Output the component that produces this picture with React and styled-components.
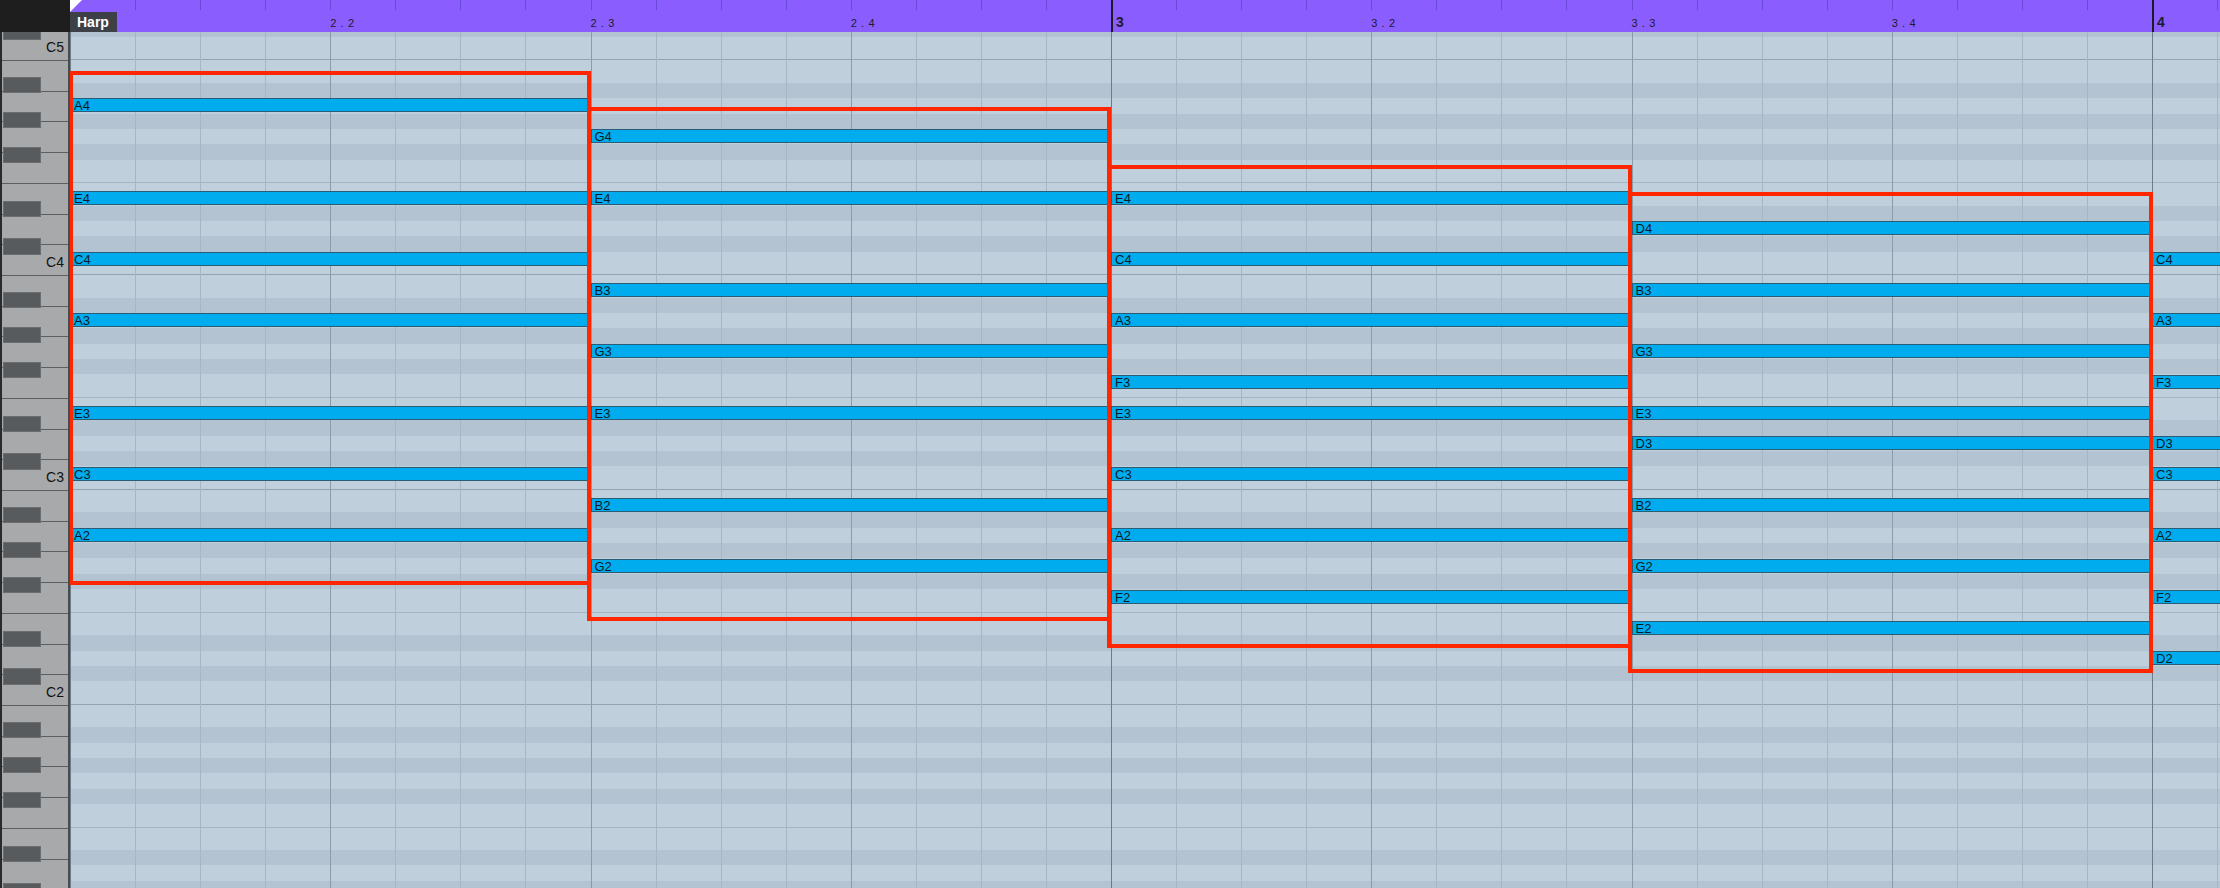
import React from "react";
import styled, { createGlobalStyle } from "styled-components";

// geometry of the piano roll (px)
const SLOT = 215 / 14; // one slot of the keyboard grid, 14 per octave
const WHITE = 215 / 7;
const SIXTEENTH = 65.0625;
const BEAT = SIXTEENTH * 4;

const OCTAVES = [5, 4, 3, 2, 1];
const WHITE_KEYS = ["B", "A", "G", "F", "E", "D", "C"];
const BLACK_TOPS = [16.7, 51.7, 86.7, 140.7, 178];
// slot kinds inside one octave block, top to bottom
const SLOTS = ["split", "w", "b", "w", "b", "w", "b", "w", "fold", "w", "b", "w", "b", "w"];
const SLOT_OF = { B: 1, A: 3, G: 5, F: 7, E: 9, D: 11, C: 13 };

const blockTop = (octave) => 28 - SLOT / 2 + (4 - octave) * 215;
const noteTop = (name) => blockTop(Number(name.slice(1))) + SLOT_OF[name[0]] * SLOT;

const CHORDS = [
  { beat: 0, notes: ["A4", "E4", "C4", "A3", "E3", "C3", "A2"] },
  { beat: 2, notes: ["G4", "E4", "B3", "G3", "E3", "B2", "G2"] },
  { beat: 4, notes: ["E4", "C4", "A3", "F3", "E3", "C3", "A2", "F2"] },
  { beat: 6, notes: ["D4", "B3", "G3", "E3", "D3", "B2", "G2", "E2"] },
  { beat: 8, notes: ["C4", "A3", "F3", "D3", "C3", "A2", "F2", "D2"] },
];

const BOXES = [
  { left: -1, top: 39, width: 522, height: 514 },
  { left: 516.5, top: 75, width: 524.5, height: 514 },
  { left: 1036.5, top: 133, width: 525, height: 483 },
  { left: 1557.5, top: 160, width: 525, height: 481 },
];

const BEATS = [
  { label: "", bar: true },
  { label: "2 . 2" },
  { label: "2 . 3" },
  { label: "2 . 4" },
  { label: "3", bar: true },
  { label: "3 . 2" },
  { label: "3 . 3" },
  { label: "3 . 4" },
  { label: "4", bar: true },
];

const GlobalStyle = createGlobalStyle`
  html, body {
    margin: 0;
    padding: 0;
    background: #c0cfdc;
    overflow: hidden;
  }
  body {
    font-family: "Liberation Sans", Arial, sans-serif;
  }
`;

const Page = styled.div`
  width: 2220px;
  height: 888px;
  display: flex;
  flex-direction: column;
  overflow: hidden;
`;

const Header = styled.div`
  display: flex;
  height: 32px;
  flex: 0 0 auto;
`;

const Corner = styled.div`
  width: 70px;
  flex: 0 0 auto;
  background: #1e1e1e;
`;

const Ruler = styled.div`
  flex: 1;
  display: flex;
  background: #8a5dff;
  overflow: hidden;
`;

const BeatCell = styled.div`
  position: relative;
  flex: 0 0 ${BEAT}px;
  display: flex;
  flex-direction: column;
  background: ${(p) =>
    p.$bar ? "linear-gradient(to right, #1c1a26 0 2px, transparent 2px)" : "none"};
`;

const TickRow = styled.div`
  display: flex;
  height: 10px;
`;

const Tick = styled.div`
  flex: 0 0 ${SIXTEENTH}px;
  box-sizing: border-box;
  border-left: 1px solid ${(p) => (p.$hidden ? "transparent" : "#6a49d6")};
`;

const Flag = styled.div`
  position: absolute;
  left: 0;
  top: 0;
  width: 12px;
  height: 12px;
  background: #ffffff;
  clip-path: polygon(0 0, 100% 0, 0 100%);
`;

const TrackChip = styled.div`
  align-self: flex-start;
  margin-top: 2px;
  height: 20px;
  padding: 0 8px 0 7px;
  background: #3d4047;
  color: #ffffff;
  font-size: 14px;
  font-weight: bold;
  line-height: 20px;
`;

const BeatLabel = styled.div`
  margin-top: ${(p) => (p.$bar ? "4px" : "6.6px")};
  padding-left: ${(p) => (p.$bar ? "5px" : "0")};
  font-size: ${(p) => (p.$bar ? "14px" : "11px")};
  line-height: ${(p) => (p.$bar ? "16px" : "13px")};
  font-weight: ${(p) => (p.$bar ? "bold" : "normal")};
  letter-spacing: ${(p) => (p.$bar ? "0" : "0.6px")};
  color: #1d1b2c;
  white-space: pre;
`;

const Body = styled.div`
  flex: 1;
  display: flex;
  min-height: 0;
`;

const Keyboard = styled.div`
  width: 66px;
  flex: 0 0 auto;
  border-left: 2px solid #2a2a2b;
  border-right: 2px solid #484b4f;
  background: #a8a9ab;
  overflow: hidden;
`;

const KeyStack = styled.div`
  margin-top: ${blockTop(5) + SLOT / 2}px;
`;

const KeyOctave = styled.div`
  position: relative;
  height: 215px;
  display: flex;
  flex-direction: column;
`;

const WhiteKey = styled.div`
  flex: 0 0 ${WHITE}px;
  box-sizing: border-box;
  border-top: 1px solid #5c5f62;
  display: flex;
  align-items: flex-end;
  justify-content: flex-end;
  padding: 0 4px 6px 0;
  font-size: 14px;
  line-height: 14px;
  color: #111111;
`;

const BlackKey = styled.div`
  position: absolute;
  left: 1px;
  width: 37.7px;
  height: 16.6px;
  box-sizing: border-box;
  background: #585b5e;
  border: 1px solid #6b6e71;
`;

const Roll = styled.div`
  position: relative;
  flex: 1;
  overflow: hidden;
`;

const RowStack = styled.div`
  margin-top: ${blockTop(5)}px;
`;

const RowBlock = styled.div`
  display: flex;
  flex-direction: column;
`;

const Row = styled.div`
  flex: 0 0 ${SLOT}px;
  display: flex;
  flex-direction: column;
  justify-content: center;
  background: ${(p) => (p.$kind === "b" ? "#b3c3d1" : "#c0cfdc")};
`;

const RowLine = styled.div`
  height: 1px;
  background: ${(p) => (p.$strong ? "#93a3b1" : "#a5b5c2")};
`;

const Columns = styled.div`
  position: absolute;
  inset: 0;
  display: flex;
  pointer-events: none;
`;

const Column = styled.div`
  flex: 0 0 ${SIXTEENTH}px;
  box-sizing: border-box;
  border-left: 1px solid
    ${(p) => (p.$level === 2 ? "#6c7c8a" : p.$level === 1 ? "#8b9baa" : "#a7b6c4")};
`;

const Note = styled.div`
  position: absolute;
  height: 14px;
  box-sizing: border-box;
  background: #00abee;
  border: 1px solid #295d75;
  padding-left: 3px;
  font-size: 13px;
  line-height: 14px;
  color: #0b1b25;
  white-space: nowrap;
  overflow: hidden;
`;

const Selection = styled.div`
  position: absolute;
  box-sizing: border-box;
  border: 4px solid #ff2600;
  pointer-events: none;
`;

export default function App() {
  return (
    <>
      <GlobalStyle />
      <Page>
        <Header>
          <Corner />
          <Ruler>
            {BEATS.map((b, i) => (
              <BeatCell key={i} $bar={b.bar && i > 0}>
                {i === 0 && <Flag />}
                <TickRow>
                  {[0, 1, 2, 3].map((t) => (
                    <Tick key={t} $hidden={t === 0 && b.bar} />
                  ))}
                </TickRow>
                {i === 0 ? (
                  <TrackChip>Harp</TrackChip>
                ) : (
                  <BeatLabel $bar={b.bar}>{b.label}</BeatLabel>
                )}
              </BeatCell>
            ))}
          </Ruler>
        </Header>
        <Body>
          <Keyboard>
            <KeyStack>
              {OCTAVES.map((o) => (
                <KeyOctave key={o}>
                  {WHITE_KEYS.map((k) => (
                    <WhiteKey key={k}>{k === "C" && o > 1 ? `C${o}` : ""}</WhiteKey>
                  ))}
                  {BLACK_TOPS.map((top) => (
                    <BlackKey key={top} style={{ top }} />
                  ))}
                </KeyOctave>
              ))}
            </KeyStack>
          </Keyboard>
          <Roll>
            <RowStack>
              {OCTAVES.map((o) => (
                <RowBlock key={o}>
                  {SLOTS.map((kind, i) => (
                    <Row key={i} $kind={kind}>
                      {kind === "split" && <RowLine $strong />}
                      {kind === "fold" && <RowLine />}
                    </Row>
                  ))}
                </RowBlock>
              ))}
            </RowStack>
            <Columns>
              {Array.from({ length: 34 }, (_, k) => (
                <Column key={k} $level={k % 16 === 0 ? 2 : k % 4 === 0 ? 1 : 0} />
              ))}
            </Columns>
            {CHORDS.map((c) =>
              c.notes.map((n) => (
                <Note
                  key={`${c.beat}-${n}`}
                  style={{ left: c.beat * BEAT, top: noteTop(n), width: BEAT * 2 }}
                >
                  {n}
                </Note>
              ))
            )}
            {BOXES.map((b, i) => (
              <Selection key={i} style={b} />
            ))}
          </Roll>
        </Body>
      </Page>
    </>
  );
}
